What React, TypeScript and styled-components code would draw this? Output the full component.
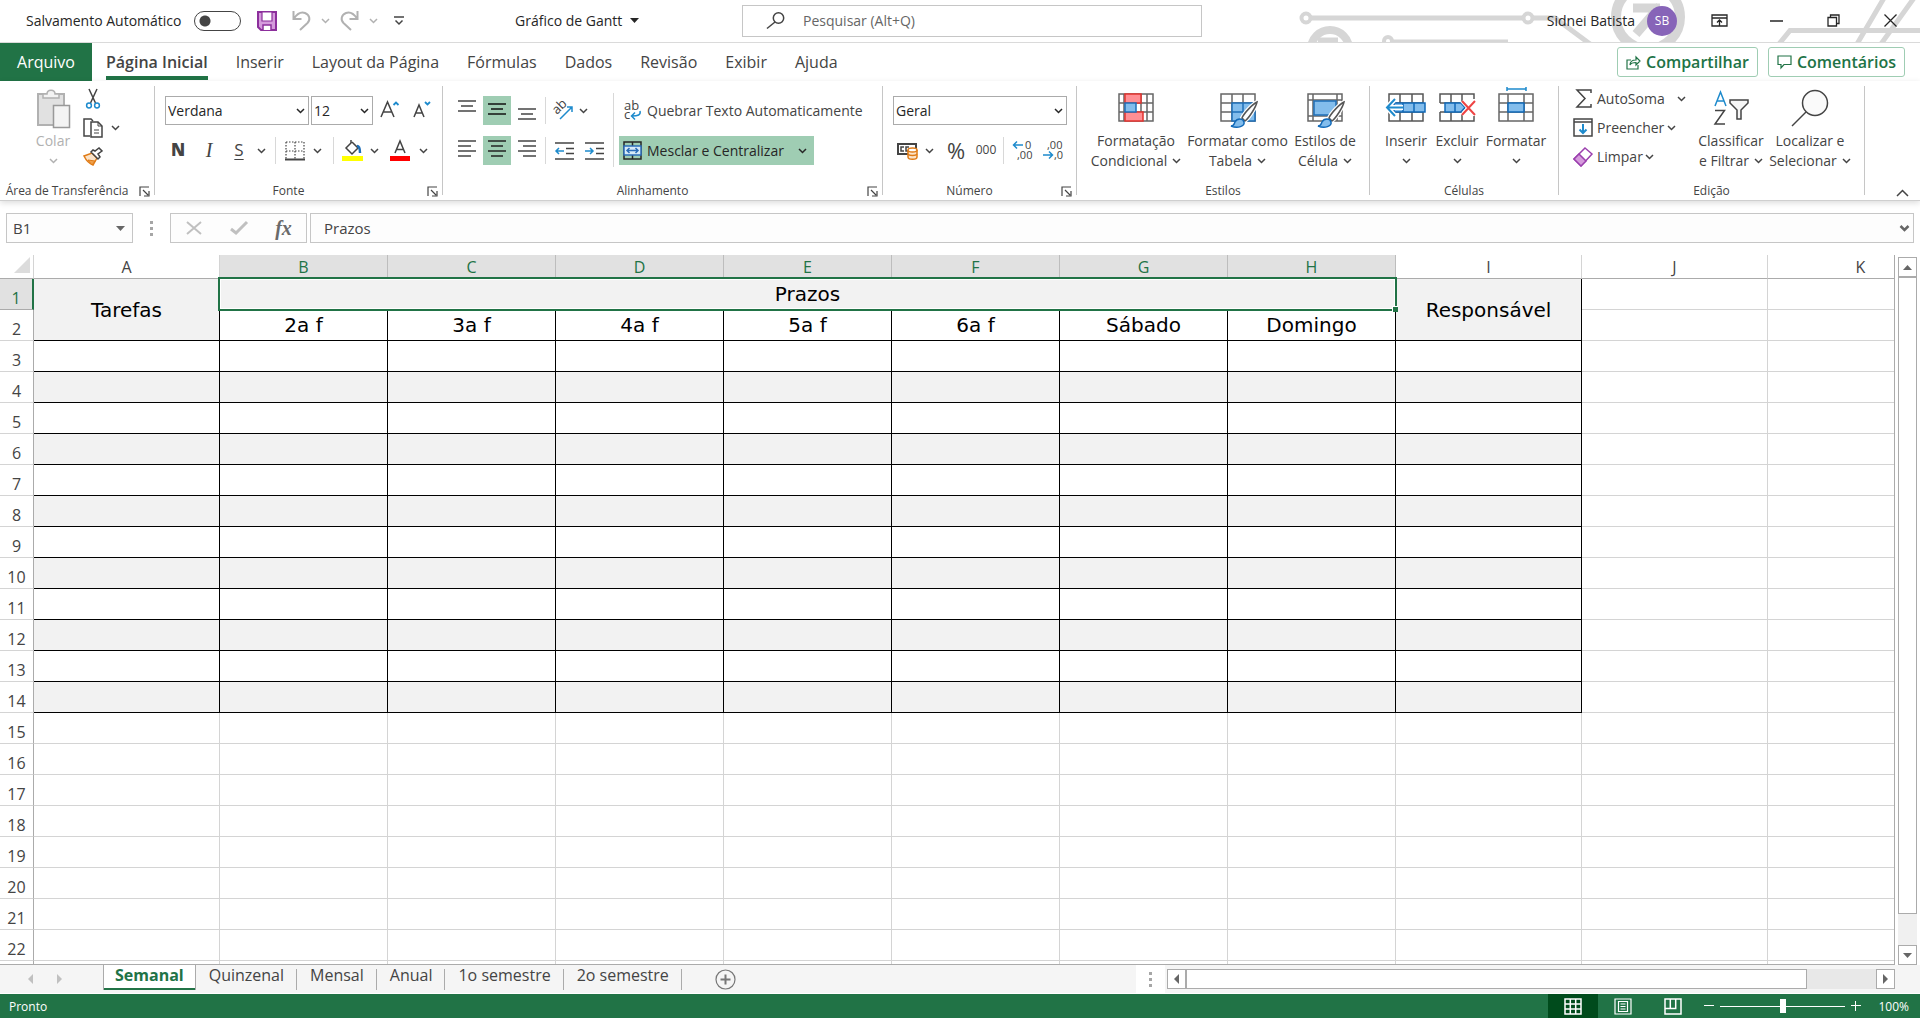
import React from "react";
import styled, { createGlobalStyle, css } from "styled-components";

const GREEN = "#217346";
const INK = "#444444";
const BLUE = "#1e8bcd";
const LINE = "#d4d4d4";
const UI = '"Open Sans", "Noto Sans", sans-serif';

const Global = createGlobalStyle`
  *, *::before, *::after { box-sizing: border-box; }
  html, body { margin: 0; padding: 0; overflow: hidden; }
  body { font-family: ${UI}; font-size: 14px; line-height: 20px; color: ${INK}; background: #fff; }
  button, input, select { font: inherit; color: inherit; margin: 0; padding: 0; border: 0; background: none; border-radius: 0; outline: 0; }
  button { cursor: pointer; white-space: nowrap; }
  svg { display: block; flex: none; overflow: visible; }
`;

const Window = styled.div`
  display: flex;
  flex-direction: column;
  height: 100vh;
  background: #fff;
`;

/* ---------- title bar ---------- */
const TitleBar = styled.header`
  position: relative;
  display: grid;
  grid-template-columns: 515fr 227fr 460fr 718fr;
  align-items: center;
  height: 43px;
  flex: none;
  padding-bottom: 1px;
  border-bottom: 1px solid #dadada;
  color: #262626;
`;
const Decor = styled.svg`
  position: absolute;
  top: 0;
  right: 0;
  overflow: hidden;
`;
const QuickAccess = styled.div`
  display: flex;
  align-items: center;
  padding-left: 26px;
`;
const AutoSave = styled.label`
  display: flex;
  align-items: center;
  gap: 13px;
  margin-right: 10px;
`;
const Toggle = styled.input`
  appearance: none;
  width: 47px;
  height: 20px;
  border: 1px solid #444;
  border-radius: 10px;
  background: radial-gradient(circle at 10px 9px, #444 5px, transparent 6px) #fff;
`;
const IconButton = styled.button<{ $w: number }>`
  display: flex;
  align-items: center;
  justify-content: center;
  width: ${(p) => p.$w}px;
  height: 32px;
`;
const DocName = styled.button`
  display: flex;
  align-items: center;
  gap: 8px;
`;
const SearchBox = styled.label`
  display: flex;
  align-items: center;
  gap: 18px;
  height: 32px;
  padding-left: 23px;
  border: 1px solid #c6c6c6;
  background: #fff;
`;
const SearchInput = styled.input`
  flex: 1;
  &::placeholder { color: #666; opacity: 1; }
`;
const Account = styled.div`
  position: relative;
  display: flex;
  align-items: center;
  justify-content: flex-end;
  padding-right: 1px;
`;
const Avatar = styled.button`
  width: 30px;
  height: 30px;
  margin: 0 14px 0 12px;
  border-radius: 50%;
  background: #8764b8;
  color: #fff;
  font-size: 12px;
`;

/* ---------- ribbon tabs ---------- */
const TabBar = styled.nav`
  display: flex;
  align-items: center;
  height: 38px;
  flex: none;
  padding-right: 15px;
`;
const FileTab = styled.button`
  align-self: stretch;
  width: 92px;
  background: ${GREEN};
  color: #fff;
  font-size: 16px;
`;
const RibbonTab = styled.button<{ $on?: boolean }>`
  height: 36px;
  margin-left: ${(p) => (p.$on ? 14 : 28)}px;
  padding-top: 4px;
  border-bottom: 4px solid ${(p) => (p.$on ? GREEN : "transparent")};
  font-size: 16px;
  font-weight: ${(p) => (p.$on ? 600 : 400)};
`;
const Spacer = styled.div`
  flex: 1;
`;
const OutlineButton = styled.button`
  display: flex;
  align-items: center;
  gap: 5px;
  height: 30px;
  margin-left: 10px;
  padding: 0 8px;
  border: 1px solid #9fcdb3;
  border-radius: 3px;
  color: ${GREEN};
  font-size: 16px;
  font-weight: 600;
`;

/* ---------- ribbon ---------- */
const Ribbon = styled.section`
  position: relative;
  z-index: 1;
  display: flex;
  height: 120px;
  flex: none;
  border-bottom: 1px solid #cfcfcf;
  background: #fff;
  box-shadow: 0 2px 6px rgba(0, 0, 0, 0.14);
`;
const Group = styled.div<{ $w: number }>`
  display: flex;
  flex-direction: column;
  flex: none;
  width: ${(p) => p.$w}px;
`;
const GroupBody = styled.div<{ $left?: number; $gap?: number }>`
  display: flex;
  flex: 1;
  gap: ${(p) => p.$gap ?? 0}px;
  padding-left: ${(p) => p.$left ?? 0}px;
`;
const GroupFooter = styled.div`
  display: flex;
  align-items: center;
  height: 18px;
  font-size: 12px;
`;
const GroupLabel = styled.span`
  flex: 1;
  text-align: center;
`;
const Launcher = styled.button`
  display: flex;
  justify-content: center;
  width: 20px;
`;
const Divider = styled.div`
  flex: none;
  width: 1px;
  margin: 5px 0;
  background: #c6c6c6;
`;
const Rows = styled.div`
  display: flex;
  flex-direction: column;
  gap: 11px;
  padding-top: 15px;
`;
const Row = styled.div<{ $left?: number; $gap?: number }>`
  display: flex;
  align-items: center;
  height: 29px;
  gap: ${(p) => p.$gap ?? 0}px;
  padding-left: ${(p) => p.$left ?? 0}px;
`;
const Tool = styled.button<{ $w: number; $on?: boolean }>`
  display: flex;
  align-items: center;
  justify-content: center;
  flex: none;
  width: ${(p) => p.$w}px;
  height: 29px;
  background: ${(p) => (p.$on ? "#9fcdb3" : "none")};
`;
const ToolSep = styled.span<{ $m: number }>`
  flex: none;
  width: 1px;
  height: 27px;
  margin: 0 ${(p) => p.$m}px;
  background: #d8d8d8;
`;
const TallSep = styled.div`
  width: 1px;
  height: 74px;
  margin: 12px 5px 0 5px;
  background: #d8d8d8;
`;
const TextTool = styled.button<{ $on?: boolean }>`
  display: flex;
  align-items: center;
  align-self: flex-start;
  gap: 5px;
  height: 29px;
  padding: 0 7px 0 4px;
  background: ${(p) => (p.$on ? "#9fcdb3" : "none")};
  color: ${(p) => (p.$on ? "#262626" : INK)};
`;
const ChevGap = styled.span`
  margin-left: 9px;
`;
const Glyph = styled.span<{ $kind: "bold" | "italic" | "under" | "pct" | "zeros" }>`
  padding-bottom: 2px;
  font-size: 17px;
  line-height: 24px;
  ${(p) => p.$kind === "bold" && css`font-weight: 800;`}
  ${(p) => p.$kind === "italic" && css`font-family: "Liberation Serif", serif; font-style: italic; font-size: 20px;`}
  ${(p) => p.$kind === "under" && css`text-decoration: underline; text-underline-offset: 3px; text-decoration-thickness: 1px;`}
  ${(p) => p.$kind === "pct" && css`font-size: 22px;`}
  ${(p) => p.$kind === "zeros" && css`font-size: 12px;`}
`;
const SelectWrap = styled.div<{ $w: number }>`
  display: grid;
  align-items: center;
  width: ${(p) => p.$w}px;
  height: 29px;
  border: 1px solid #ababab;
  color: #262626;
  > * { grid-area: 1 / 1; }
  > svg { justify-self: end; margin-right: 3px; pointer-events: none; }
`;
const Select = styled.select`
  appearance: none;
  width: 100%;
  height: 27px;
  padding-left: 2px;
`;
const BigTool = styled.button<{ $w: number; $off?: boolean }>`
  display: flex;
  flex-direction: column;
  align-items: center;
  flex: none;
  width: ${(p) => p.$w}px;
  padding-top: 8px;
  color: ${(p) => (p.$off ? "#b1b1b1" : INK)};
`;
const BigIcon = styled.span`
  display: flex;
  align-items: flex-start;
  height: 42px;
`;
const BigLine = styled.span`
  display: flex;
  align-items: center;
  justify-content: center;
  gap: 5px;
  height: 20px;
`;
const SmallStack = styled.div<{ $w: number }>`
  display: flex;
  flex-direction: column;
  flex: none;
  width: ${(p) => p.$w}px;
  padding-top: 3px;
`;
const StackTool = styled.button<{ $gap?: number }>`
  display: flex;
  align-items: center;
  gap: ${(p) => p.$gap ?? 0}px;
  height: 29px;
`;
const StackIcon = styled.span`
  display: flex;
  flex: none;
  justify-content: center;
  width: 20px;
  margin-right: 4px;
`;
const Collapse = styled.button`
  align-self: flex-end;
  margin: 0 11px 3px auto;
`;

/* ---------- formula bar ---------- */
const FormulaBar = styled.div`
  display: flex;
  align-items: center;
  flex: none;
  height: 54px;
  padding: 0 6px;
  font-size: 15px;
`;
const Boxed = styled.div<{ $w?: number }>`
  display: flex;
  align-items: center;
  ${(p) => (p.$w ? css`width: ${p.$w}px; flex: none;` : css`flex: 1;`)}
  height: 30px;
  border: 1px solid #c6c6c6;
  background: #fdfdfd;
`;
const NameInput = styled.input`
  flex: 1;
  min-width: 0;
  padding-left: 6px;
`;
const FormulaInput = styled.input`
  flex: 1;
  padding-left: 13px;
`;
const FxButton = styled.button`
  display: flex;
  flex: 1;
  align-items: center;
  justify-content: center;
`;
const Pad = styled.span<{ $w: number }>`
  display: flex;
  flex: none;
  justify-content: center;
  width: ${(p) => p.$w}px;
`;
const Fx = styled.span`
  font-family: "Liberation Serif", serif;
  font-style: italic;
  font-weight: 700;
  font-size: 20px;
  color: #6a6a6a;
`;

/* ---------- sheet ---------- */
const SheetArea = styled.main`
  display: flex;
  flex: 1;
  min-height: 0;
  padding-right: 3px;
`;
const Viewport = styled.div`
  flex: 1;
  min-width: 0;
  overflow: hidden;
  border-bottom: 1px solid #ababab;
  border-right: 1px solid #ababab;
`;
const Grid = styled.table`
  table-layout: fixed;
  width: 1954px;
  border-collapse: separate;
  border-spacing: 0;
`;
const Col = styled.col<{ $w: number }>`
  width: ${(p) => p.$w}px;
`;
const Corner = styled.th`
  height: 24px;
  padding: 0 3px 3px 0;
  border-right: 1px solid ${LINE};
  border-bottom: 1px solid #ababab;
  > svg { margin-left: auto; }
`;
const ColHead = styled.th<{ $on?: boolean }>`
  height: 24px;
  padding: 0;
  border-right: 1px solid ${(p) => (p.$on ? "#bdbdbd" : LINE)};
  border-bottom: 1px solid #ababab;
  background: ${(p) => (p.$on ? "#e1e1e1" : "#fff")};
  color: ${(p) => (p.$on ? GREEN : INK)};
  font-weight: 400;
  font-size: 16px;
`;
const RowHead = styled.th<{ $on?: boolean }>`
  height: 31px;
  padding: 7px 0 0;
  border-bottom: 1px solid ${(p) => (p.$on ? "#ababab" : LINE)};
  border-right: ${(p) => (p.$on ? `2px solid ${GREEN}` : "1px solid #ababab")};
  background: ${(p) => (p.$on ? "#e1e1e1" : "#fff")};
  color: ${(p) => (p.$on ? GREEN : INK)};
  font-weight: 400;
  font-size: 16px;
  line-height: 22px;
`;
const Cell = styled.td<{ $ink?: boolean; $shade?: boolean }>`
  height: 31px;
  padding: 0;
  border-right: 1px solid ${(p) => (p.$ink ? "#000" : LINE)};
  border-bottom: 1px solid ${(p) => (p.$ink ? "#000" : LINE)};
  background: ${(p) => (p.$shade ? "#f2f2f2" : "#fff")};
  color: #000;
  font-family: Verdana, "DejaVu Sans", sans-serif;
  font-size: 20px;
  line-height: 24px;
  text-align: center;
`;
const SelectedCell = styled(Cell)`
  position: relative;
  &::before {
    content: "";
    position: absolute;
    inset: -2px;
    border: 2px solid ${GREEN};
    box-shadow: inset 0 0 0 1px #fff;
  }
  &::after {
    content: "";
    position: absolute;
    right: -3px;
    bottom: -3px;
    width: 6px;
    height: 6px;
    border: solid #fff;
    border-width: 1px 0 0 1px;
    background: ${GREEN};
  }
`;
const VScroll = styled.div`
  display: flex;
  flex-direction: column;
  width: 19px;
  margin: 2px 0 0 3px;
  background: #f0f0f0;
`;
const ArrowButton = styled.button`
  display: flex;
  align-items: center;
  justify-content: center;
  flex: none;
  width: 19px;
  height: 20px;
  border: 1px solid #ababab;
  background: #fff;
`;
const Thumb = styled.div<{ $grow: number }>`
  flex: ${(p) => p.$grow};
  border: 1px solid #ababab;
  background: #fff;
`;
const Track = styled.div<{ $grow: number }>`
  flex: ${(p) => p.$grow};
`;

/* ---------- sheet tabs ---------- */
const BottomBar = styled.div`
  display: flex;
  flex: none;
  height: 29px;
  border-bottom: 1px solid #fff;
  background: #f5f5f5;
`;
const SheetNav = styled.div`
  display: flex;
  align-items: center;
  justify-content: center;
  gap: 24px;
  width: 103px;
  padding-right: 14px;
`;
const SheetTab = styled.button<{ $on?: boolean }>`
  height: 25px;
  padding: 0 ${(p) => (p.$on ? 11 : 13)}px 5px;
  font-size: 16px;
  ${(p) =>
    p.$on
      ? css`
          border: solid #ababab;
          border-width: 0 1px;
          box-shadow: inset 0 -2px 0 ${GREEN};
          background: #fff;
          color: ${GREEN};
          font-weight: 700;
        `
      : css`
          background: linear-gradient(#ababab, #ababab) right 4px / 1px 21px no-repeat;
        `}
`;
const AddSheet = styled.button`
  margin-left: 33px;
`;
const HScroll = styled.div`
  display: flex;
  align-items: center;
  width: 784px;
`;
const Grip = styled.span`
  display: flex;
  align-items: center;
  justify-content: center;
  align-self: stretch;
  width: 29px;
  margin-right: 2px;
  background: #fff;
`;
const HTrack = styled.div`
  display: flex;
  flex: 1;
  height: 20px;
  margin-right: 25px;
  background: #e8e8e8;
`;

/* ---------- status bar ---------- */
const StatusBar = styled.footer`
  display: flex;
  align-items: center;
  flex: none;
  height: 24px;
  padding: 0 11px 0 9px;
  background: ${GREEN};
  color: #fff;
  font-size: 12px;
`;
const StatusText = styled.span`
  padding-top: 2px;
`;
const ViewButton = styled.button<{ $on?: boolean }>`
  display: flex;
  align-items: center;
  justify-content: center;
  width: 50px;
  height: 24px;
  background: ${(p) => (p.$on ? "#004b1c" : "none")};
`;
const ZoomButton = styled.button`
  display: flex;
  justify-content: center;
  width: 22px;
`;
const ZoomRange = styled.input`
  appearance: none;
  width: 125px;
  height: 16px;
  background: linear-gradient(#fff, #fff) center / 100% 1px no-repeat;
  &::-webkit-slider-thumb {
    appearance: none;
    width: 6px;
    height: 14px;
    background: #fff;
  }
`;
const ZoomValue = styled(StatusText)`
  width: 42px;
  text-align: right;
`;

/* ---------- icons ---------- */
type IcoProps = { w: number; h: number; s?: string; sw?: number; children: React.ReactNode };
const Ico = ({ w, h, s = INK, sw = 1.5, children }: IcoProps) => (
  <svg width={w} height={h} viewBox={`0 0 ${w} ${h}`} fill="none" stroke={s} strokeWidth={sw} aria-hidden="true">
    {children}
  </svg>
);
const Chev = ({ c = INK }: { c?: string }) => (
  <Ico w={9} h={6} s={c}><path d="M1 1l3.500 3.500L8 1" /></Ico>
);
const Tri = ({ dir, c = "#666" }: { dir: "u" | "d" | "l" | "r"; c?: string }) => {
  const d = { u: "M0 5h9L4.500 0z", d: "M0 0h9L4.500 5z", l: "M5 0v10L0 5z", r: "M0 0v10l5-5z" }[dir];
  const flat = dir === "u" || dir === "d";
  return <svg width={flat ? 9 : 5} height={flat ? 5 : 10} fill={c} aria-hidden="true"><path d={d} /></svg>;
};
const Dots = () => (
  <svg width="3" height="15" fill="#a6a6a6" aria-hidden="true"><path d="M0 0h3v3H0zM0 6h3v3H0zM0 12h3v3H0z" /></svg>
);
const HLines = ({ rows, h = 21, c = INK }: { rows: number[][]; h?: number; c?: string }) => (
  <Ico w={18} h={h} s={c}>{rows.map(([y, a, b]) => <path key={y} d={`M${a} ${y}H${b}`} />)}</Ico>
);
const SaveIcon = () => (
  <Ico w={20} h={20} s="#8c2f9c" sw={2}>
    <path d="M1 1h18v18H4l-3-3z" fill="#d59bdc" />
    <path d="M5 1h10v9H5z" fill="#fff" strokeWidth="1.200" />
    <path d="M6 19v-5h8v5" fill="#fff" strokeWidth="1.500" />
  </Ico>
);
const UndoIcon = ({ flip }: { flip?: boolean }) => (
  <Ico w={19} h={21} s="#b1b1b1" sw={2}>
    <g transform={flip ? "translate(19 0) scale(-1 1)" : undefined}>
      <path d="M1.500 1v8h8M2 8.500C5 4 9 1.500 13 3c5 2 5.500 7 2.500 10L8 20" />
    </g>
  </Ico>
);
const Paste = () => (
  <Ico w={35} h={40} s="#b1b1b1">
    <path d="M2 5h26v31H2z" fill="#e1e1e1" strokeWidth="2" />
    <path d="M7 9V5h4c0-5 8-5 8 0h4v4z" fill="#f3f3f3" />
    <path d="M17.500 16.500h16v22h-16z" fill="#f3f3f3" stroke="#999" />
  </Ico>
);
const Cut = () => (
  <Ico w={14} h={20}>
    <path d="M3 0l6.500 14M11 0L4.500 14" />
    <g stroke={BLUE}><circle cx="3" cy="16.500" r="2.400" /><circle cx="11" cy="16.500" r="2.400" /></g>
  </Ico>
);
const Copy = () => (
  <Ico w={20} h={20}>
    <path d="M7 18H1V1h7l2 2" /><path d="M8 4h7l4 4v11H8z" fill="#fff" /><path d="M15 4v4h4M11 12h5M11 15h5" strokeWidth="1" />
  </Ico>
);
const Brush = () => (
  <Ico w={20} h={19}>
    <path d="M1 9l8-3 5 5-4 7c-3-1-7-5-9-9z" fill="#fbe3c8" stroke="#e07b16" />
    <path d="M5 13l7 1-3 4z" fill="#f0a04a" stroke="#e07b16" strokeWidth="1" />
    <path d="M8 5l7 7 2-2-2-3 4-3-3-3-4 3-2-1z" fill="#fff" />
  </Ico>
);
const Borders = () => (
  <Ico w={20} h={20}>
    <path d="M1 1h18M1 10h18M1 1v17M10 1v17M19 1v17" strokeDasharray="1.500 1.500" strokeWidth="1.200" /><path d="M0 18.500h20" strokeWidth="2" />
  </Ico>
);
const Fill = () => (
  <Ico w={21} h={21}>
    <path d="M10 2l6 6-6 6-6-6 5-5V0" /><path d="M15 6c2 0 3 3 3 7" stroke="#1e6fb8" strokeWidth="2.500" />
    <path d="M0 16h21v5H0z" fill="#ff0" stroke="none" />
  </Ico>
);
const FontColor = () => (
  <Ico w={20} h={21}><path d="M5 13L10 1l5 12M6.500 9.500h7" /><path d="M0 16h20v5H0z" fill="#f00" stroke="none" /></Ico>
);
const GrowFont = ({ down }: { down?: boolean }) => (
  <Ico w={20} h={20}>
    {down ? <path d="M2 16L7 4l5 12M4 12h6" /> : <path d="M1 16L7.500 1 14 16M3.500 11h8" />}
    <path d={down ? "M13 1l2.500 2.500L18 1" : "M13.500 4L16 1.500 18.500 4"} stroke={BLUE} strokeWidth="1.800" />
  </Ico>
);
const mini = { stroke: "none", fill: INK, fontFamily: UI } as const;
const Rotate = () => (
  <Ico w={21} h={20}>
    <text {...mini} fontSize="13" transform="translate(4 14) rotate(-45)">ab</text>
    <path d="M7 18L19 6M14 6h5v5" stroke={BLUE} />
  </Ico>
);
const Wrap = () => (
  <Ico w={19} h={21}>
    <text {...mini} fontSize="13" x="1" y="10">ab</text><text {...mini} fontSize="13" x="1" y="19">c</text>
    <path d="M17 11c1 4-2 5-8 5M12 12.500L8.500 16l3.500 3.500" stroke={BLUE} />
  </Ico>
);
const Merge = () => (
  <Ico w={19} h={19} s="#262626">
    <path d="M1 1h17v17H1zM9.500 1v17" /><path d="M1 5h17v9H1z" fill="#d6eaf8" stroke="#2b6cb8" />
    <path d="M4 9.500h11M6.500 7L4 9.500 6.500 12M12.500 7L15 9.500 12.500 12" stroke="#2b6cb8" />
  </Ico>
);
const Indent = ({ right }: { right?: boolean }) => (
  <Ico w={19} h={20}>
    <path d="M0 2h19M11 7.500h8M11 12.500h8M0 18h19" />
    <path d={right ? "M0 10h8M5 7l3 3-3 3" : "M1 10h8M4 7l-3 3 3 3"} stroke={BLUE} />
  </Ico>
);
const Money = () => (
  <Ico w={21} h={18}>
    <path d="M1 2h18v10H1z" strokeWidth="2" /><path d="M7 5H4v4h3M12 5H9v4h2" />
    <path d="M11 8v7c0 3 9 3 9 0V8" fill="#fbe3c8" stroke="#e07b16" /><ellipse cx="15.500" cy="8" rx="4.500" ry="2" fill="#fff" stroke="#e07b16" />
    <path d="M11 12c1 2 8 2 9 0" stroke="#e07b16" />
  </Ico>
);
const Decimals = ({ less }: { less?: boolean }) => (
  <Ico w={20} h={21}>
    <text {...mini} fontSize="11" x={less ? 4 : 12} y="9">{less ? ",00" : "0"}</text>
    <text {...mini} fontSize="11" x={less ? 11 : 4} y="19">{less ? ",0" : ",00"}</text>
    <path d={less ? "M0 15h9M6 11.500L9.500 15 6 18.500" : "M1 5h9M4 1.500L.500 5 4 8.500"} stroke={BLUE} />
  </Ico>
);
const CondFormat = () => (
  <Ico w={36} h={36} s="#666">
    <path d="M1 5h34v27H1zM6 5v27M29 5v27M1 14h34M1 23h34M23 5v27" />
    <path d="M7 5h16v9H7zM7 23h18v9H7z" fill="#ff8f94" stroke="#e3342f" /><path d="M7 14h11v9H7z" fill="#83bdec" stroke="#1e6fb8" />
  </Ico>
);
const PaintBrush = () => (
  <g>
    <path d="M37 13c-4 2-13 11-15 16l3 3c4-3 11-14 12-19z" fill="#fff" stroke="#fff" strokeWidth="4" />
    <path d="M37 13c-4 2-13 11-15 16l3 3c4-3 11-14 12-19z" fill="#fff" stroke="#555" />
    <path d="M11 37c3 0 3-2 4-4 2-4 8-4 9 0s-6 7-13 4z" fill="#83bdec" stroke="#1169b8" />
  </g>
);
const TableFormat = () => (
  <Ico w={36} h={40} s="#666">
    <path d="M1 5h34v27H1zM12 5v27M23 5v27M1 14h34M1 23h34" />
    <path d="M12 14h23v18H12z" fill="#83bdec" stroke="#1e6fb8" /><path d="M23 14v18M12 23h23" stroke="#1e6fb8" /><PaintBrush />
  </Ico>
);
const CellStyle = () => (
  <Ico w={36} h={40} s="#666">
    <path d="M1 5h34v27H1zM6 5v27M30 5v27M1 11h34M1 27h34" /><path d="M7 12h22v14H7z" fill="#83bdec" stroke="#1e6fb8" /><PaintBrush />
  </Ico>
);
const InsertCell = () => (
  <Ico w={40} h={36} s="#555">
    <path d="M3 5h34v27H3zM14 5v27M26 5v27M3 14h34M3 23h34" /><path d="M8 14h31v9H8z" fill="#83bdec" stroke="#1169b8" />
    <path d="M17 14v9M28 14v9" stroke="#1169b8" /><path d="M17 18.500H2M9 10l-8 8.500L9 27" stroke="#fff" strokeWidth="5" />
    <path d="M17 18.500H2M9 10l-8 8.500L9 27" stroke={BLUE} strokeWidth="2" />
  </Ico>
);
const DeleteCell = () => (
  <Ico w={36} h={36} s="#555">
    <path d="M1 14V5h34v5M12 5v9M23 5v9M1 23v9h34v-5M12 32v-9M23 32v-9M1 14h21M1 23h21" /><path d="M6 14h16l4 4.500-4 4.500H6z" fill="#83bdec" stroke="#1169b8" />
    <path d="M16 14v9" stroke="#1169b8" /><path d="M23 12l13 14M36 12L23 26" stroke="#fff" strokeWidth="4" /><path d="M23 12l13 14M36 12L23 26" stroke="#ee4444" strokeWidth="2" />
  </Ico>
);
const FormatCell = () => (
  <Ico w={36} h={36} s="#666">
    <path d="M1 5h34v27H1zM10 5v27M26 5v27M1 14h34M1 23h34" /><path d="M10 14h16v9H10z" fill="#83bdec" stroke="#1169b8" />
    <path d="M9 0h19M9-2v4M28-2v4" stroke={BLUE} />
  </Ico>
);
const Sigma = () => <Ico w={17} h={19}><path d="M16 4V1H2l8 8.500L2 18h14v-3" /></Ico>;
const FillDown = () => (
  <Ico w={20} h={19}><path d="M1 1h18v17H1zM1 4h18" /><path d="M10 6v9M6.500 11.500L10 15l3.500-3.500" stroke={BLUE} strokeWidth="2" /></Ico>
);
const Eraser = () => (
  <Ico w={20} h={20} s="#9b3fae"><path d="M12 1l7 6-11 12-7-7z" fill="#fff" /><path d="M6 7l7 7-5 5-7-7z" fill="#d59bdc" /></Ico>
);
const SortFilter = () => (
  <Ico w={37} h={37}>
    <path d="M2 17L7.500 3 13 17M4 12h7" stroke={BLUE} /><path d="M2 21.500h9.500L2 35h10" />
    <path d="M17 11h18v3l-7 7v9h-4v-9l-7-7z" fill="#f6f6f6" />
  </Ico>
);
const Find = () => (
  <Ico w={38} h={38}><circle cx="24" cy="14" r="12.500" fill="#fafafa" /><path d="M15 23L1 37" /></Ico>
);
const LaunchIcon = () => (
  <Ico w={11} h={11} sw={1.2}><path d="M1 10V1h9M4 4l5 5M10 5v5H5" /></Ico>
);

/* ---------- data ---------- */
const RIBBON_TABS = ["Página Inicial", "Inserir", "Layout da Página", "Fórmulas", "Dados", "Revisão", "Exibir", "Ajuda"];
const COLUMNS = ["A", "B", "C", "D", "E", "F", "G", "H", "I", "J", "K"];
const DAYS = ["2a f", "3a f", "4a f", "5a f", "6a f", "Sábado", "Domingo"];
const SHEETS = ["Semanal", "Quinzenal", "Mensal", "Anual", "1o semestre", "2o semestre"];
const colWidth = (i: number) => (i > 0 && i < 8 ? 168 : 186);

const Footer = ({ label, launch = true }: { label: string; launch?: boolean }) => (
  <GroupFooter>
    <GroupLabel>{label}</GroupLabel>
    {launch && <Launcher aria-label={`Opções de ${label}`}><LaunchIcon /></Launcher>}
  </GroupFooter>
);
const Big = ({ w, icon, a, b, off }: { w: number; icon: React.ReactNode; a: string; b?: string; off?: boolean }) => (
  <BigTool $w={w} $off={off}>
    <BigIcon>{icon}</BigIcon>
    <BigLine>{a}</BigLine>
    <BigLine>{b}<Chev c={off ? "#b1b1b1" : INK} /></BigLine>
  </BigTool>
);
const Drop = ({ w, label }: { w: number; label: string }) => <Tool $w={w} aria-label={label}><Chev /></Tool>;
const Combo = ({ w, value, label }: { w: number; value: string; label: string }) => (
  <SelectWrap $w={w}><Select aria-label={label} defaultValue={value}><option>{value}</option></Select><Chev c="#262626" /></SelectWrap>
);

export default function App() {
  return (
    <Window>
      <Global />
      <TitleBar>
        <Decor width="640" height="42" viewBox="0 0 640 42" fill="none" stroke="#d6d6d6" strokeWidth="5" aria-hidden="true">
          <circle cx="26" cy="18" r="4.500" strokeWidth="4" /><path d="M31 18h212" />
          <circle cx="248" cy="18" r="4.500" strokeWidth="4" /><path d="M253 18h22l35 26" />
          <circle cx="50" cy="49" r="19" strokeWidth="8" /><path d="M38 40h20" />
          <circle cx="108" cy="41" r="4" strokeWidth="4" /><path d="M113 42h115" />
          <circle cx="368" cy="17" r="32" strokeWidth="10" /><path d="M353 8h27M380 6L356 34" strokeWidth="9" />
          <path d="M499 44l11-13.500h130M577 44L604-2M601 44L634-2" />
        </Decor>
        <QuickAccess>
          <AutoSave>Salvamento Automático<Toggle type="checkbox" /></AutoSave>
          <IconButton $w={32} aria-label="Salvar"><SaveIcon /></IconButton>
          <IconButton $w={36} aria-label="Desfazer"><UndoIcon /></IconButton>
          <IconButton $w={12} aria-label="Opções de desfazer"><Chev c="#b1b1b1" /></IconButton>
          <IconButton $w={36} aria-label="Refazer"><UndoIcon flip /></IconButton>
          <IconButton $w={12} aria-label="Opções de refazer"><Chev c="#b1b1b1" /></IconButton>
          <IconButton $w={40} aria-label="Personalizar barra"><Ico w={10} h={9}><path d="M0 1h10M1.500 4.500L5 8l3.500-3.500" /></Ico></IconButton>
        </QuickAccess>
        <DocName>Gráfico de Gantt<Tri dir="d" c="#262626" /></DocName>
        <SearchBox>
          <Ico w={19} h={17}><circle cx="12.500" cy="6" r="5.200" /><path d="M9 10l-8 6.500" /></Ico>
          <SearchInput aria-label="Pesquisar" placeholder="Pesquisar (Alt+Q)" />
        </SearchBox>
        <Account>
          <span>Sidnei Batista</span>
          <Avatar>SB</Avatar>
          <IconButton $w={57} aria-label="Exibição da faixa"><Ico w={17} h={13} s="#262626"><path d="M1 1h15v11H1zM1 4h15M8.500 12V6M6 8.500L8.500 6 11 8.500" strokeWidth="1.300" /></Ico></IconButton>
          <IconButton $w={57} aria-label="Minimizar"><Ico w={13} h={2} s="#262626"><path d="M0 1h13" /></Ico></IconButton>
          <IconButton $w={57} aria-label="Restaurar"><Ico w={13} h={13} s="#262626" sw={1.3}><path d="M1 3.500h8.500V12H1zM3.500 3.500V1H12v8.500H9.500" /></Ico></IconButton>
          <IconButton $w={57} aria-label="Fechar"><Ico w={13} h={13} s="#262626" sw={1.3}><path d="M.500.500l12 12M12.500.500l-12 12" /></Ico></IconButton>
        </Account>
      </TitleBar>

      <TabBar>
        <FileTab>Arquivo</FileTab>
        {RIBBON_TABS.map((t, i) => <RibbonTab key={t} $on={i === 0}>{t}</RibbonTab>)}
        <Spacer />
        <OutlineButton><Ico w={15} h={15} s={GREEN} sw={1.2}><path d="M5 5H1v9h11v-4M4 10c0-4 3-5 6-5V2l4 4-4 4V7.500C7 7.500 5 8 4 10z" /></Ico>Compartilhar</OutlineButton>
        <OutlineButton><Ico w={15} h={14} s={GREEN} sw={1.2}><path d="M1 1h13v8.500H7L4 13V9.500H1z" /></Ico>Comentários</OutlineButton>
      </TabBar>

      <Ribbon>
        <Group $w={154}>
          <GroupBody $left={31}>
            <Big w={44} icon={<Paste />} a="Colar" off />
            <SmallStack $w={60}>
              <StackTool aria-label="Recortar"><Pad $w={36}><Cut /></Pad></StackTool>
              <StackTool aria-label="Copiar"><Pad $w={36}><Copy /></Pad><Chev /></StackTool>
              <StackTool aria-label="Pincel de formatação"><Pad $w={36}><Brush /></Pad></StackTool>
            </SmallStack>
          </GroupBody>
          <Footer label="Área de Transferência" />
        </Group>
        <Divider />

        <Group $w={287}>
          <GroupBody>
            <Rows>
              <Row $left={10} $gap={2}>
                <Combo w={144} value="Verdana" label="Fonte" />
                <Combo w={62} value="12" label="Tamanho da fonte" />
                <Tool $w={30} aria-label="Aumentar fonte"><GrowFont /></Tool>
                <Tool $w={30} aria-label="Diminuir fonte"><GrowFont down /></Tool>
              </Row>
              <Row $left={7}>
                <Tool $w={32}><Glyph $kind="bold">N</Glyph></Tool>
                <Tool $w={30}><Glyph $kind="italic">I</Glyph></Tool>
                <Tool $w={30}><Glyph $kind="under">S</Glyph></Tool>
                <Drop w={14} label="Opções de sublinhado" />
                <ToolSep $m={7} />
                <Tool $w={24} aria-label="Bordas"><Borders /></Tool>
                <Drop w={20} label="Opções de bordas" />
                <ToolSep $m={6} />
                <Tool $w={24} aria-label="Cor de preenchimento"><Fill /></Tool>
                <Drop w={20} label="Opções de preenchimento" />
                <Tool $w={32} aria-label="Cor da fonte"><FontColor /></Tool>
                <Drop w={14} label="Opções de cor" />
              </Row>
            </Rows>
          </GroupBody>
          <Footer label="Fonte" />
        </Group>
        <Divider />

        <Group $w={439}>
          <GroupBody>
            <Rows>
              <Row $left={10} $gap={2}>
                <Tool $w={28} aria-label="Alinhar acima"><HLines rows={[[1, 0, 18], [6, 3, 15], [11, 0, 18]]} /></Tool>
                <Tool $w={28} $on aria-label="Alinhar no meio"><HLines c="#111" rows={[[4, 0, 18], [9, 3, 15], [14, 0, 18]]} /></Tool>
                <Tool $w={28} aria-label="Alinhar abaixo"><HLines rows={[[9, 0, 18], [14, 3, 15], [19, 0, 18]]} /></Tool>
                <ToolSep $m={2} />
                <Tool $w={27} aria-label="Orientação"><Rotate /></Tool>
                <Drop w={8} label="Opções de orientação" />
              </Row>
              <Row $left={10} $gap={2}>
                <Tool $w={28} aria-label="Alinhar à esquerda"><HLines rows={[[1, 0, 18], [6, 0, 13], [11, 0, 18], [16, 0, 13]]} /></Tool>
                <Tool $w={28} $on aria-label="Centralizar"><HLines c="#222" rows={[[1, 0, 18], [6, 3, 15], [11, 0, 18], [16, 3, 15]]} /></Tool>
                <Tool $w={28} aria-label="Alinhar à direita"><HLines rows={[[1, 0, 18], [6, 5, 18], [11, 0, 18], [16, 5, 18]]} /></Tool>
                <ToolSep $m={2} />
                <Tool $w={28} aria-label="Diminuir recuo"><Indent /></Tool>
                <Tool $w={28} aria-label="Aumentar recuo"><Indent right /></Tool>
              </Row>
            </Rows>
            <TallSep />
            <Rows>
              <TextTool><Wrap />Quebrar Texto Automaticamente</TextTool>
              <TextTool $on><Merge />Mesclar e Centralizar<ChevGap><Chev c="#262626" /></ChevGap></TextTool>
            </Rows>
          </GroupBody>
          <Footer label="Alinhamento" />
        </Group>
        <Divider />

        <Group $w={193}>
          <GroupBody>
            <Rows>
              <Row $left={10}><Combo w={174} value="Geral" label="Formato de número" /></Row>
              <Row $left={10}>
                <Tool $w={28} aria-label="Formato de contabilização"><Money /></Tool>
                <Drop w={16} label="Opções de moeda" />
                <Tool $w={38}><Glyph $kind="pct">%</Glyph></Tool>
                <Tool $w={22}><Glyph $kind="zeros">000</Glyph></Tool>
                <ToolSep $m={6} />
                <Tool $w={26} aria-label="Aumentar casas decimais"><Decimals /></Tool>
                <Tool $w={34} aria-label="Diminuir casas decimais"><Decimals less /></Tool>
              </Row>
            </Rows>
          </GroupBody>
          <Footer label="Número" />
        </Group>
        <Divider />

        <Group $w={292}>
          <GroupBody $left={11} $gap={1}>
            <Big w={96} icon={<CondFormat />} a="Formatação" b="Condicional" />
            <Big w={105} icon={<TableFormat />} a="Formatar como" b="Tabela" />
            <Big w={68} icon={<CellStyle />} a="Estilos de" b="Célula" />
          </GroupBody>
          <Footer label="Estilos" launch={false} />
        </Group>
        <Divider />

        <Group $w={188}>
          <GroupBody $left={11}>
            <Big w={50} icon={<InsertCell />} a="Inserir" />
            <Big w={52} icon={<DeleteCell />} a="Excluir" />
            <Big w={66} icon={<FormatCell />} a="Formatar" />
          </GroupBody>
          <Footer label="Células" launch={false} />
        </Group>
        <Divider />

        <Group $w={305}>
          <GroupBody $left={14}>
            <SmallStack $w={122}>
              <StackTool><StackIcon><Sigma /></StackIcon>AutoSoma<Pad $w={34}><Chev /></Pad></StackTool>
              <StackTool><StackIcon><FillDown /></StackIcon>Preencher<Pad $w={14}><Chev /></Pad></StackTool>
              <StackTool><StackIcon><Eraser /></StackIcon>Limpar<Pad $w={14}><Chev /></Pad></StackTool>
            </SmallStack>
            <Big w={72} icon={<SortFilter />} a="Classificar" b="e Filtrar" />
            <Big w={86} icon={<Find />} a="Localizar e" b="Selecionar" />
          </GroupBody>
          <Footer label="Edição" launch={false} />
        </Group>
        <Divider />
        <Collapse aria-label="Recolher faixa"><Ico w={13} h={8}><path d="M1 7l5.500-5.500L12 7" /></Ico></Collapse>
      </Ribbon>

      <FormulaBar>
        <Boxed $w={127}><NameInput aria-label="Caixa de nome" defaultValue="B1" /><Pad $w={24}><Tri dir="d" /></Pad></Boxed>
        <Pad $w={37}><Dots /></Pad>
        <Boxed $w={137}>
          <FxButton aria-label="Cancelar"><Ico w={16} h={14} s="#c0c0c0" sw={2}><path d="M1 1l14 12M15 1L1 13" /></Ico></FxButton>
          <FxButton aria-label="Inserir"><Ico w={18} h={14} s="#c0c0c0" sw={3}><path d="M1 8l5 4L17 1" /></Ico></FxButton>
          <FxButton><Fx>fx</Fx></FxButton>
        </Boxed>
        <Pad $w={3} />
        <Boxed><FormulaInput aria-label="Fórmula" defaultValue="Prazos" /><Pad $w={18}><Ico w={9} h={7} s="#666" sw={2.5}><path d="M.500 1l4 4 4-4" /></Ico></Pad></Boxed>
      </FormulaBar>

      <SheetArea>
        <Viewport>
          <Grid>
            <colgroup>
              <Col $w={34} />
              {COLUMNS.map((c, i) => <Col key={c} $w={colWidth(i)} />)}
            </colgroup>
            <thead>
              <tr>
                <Corner><svg width="16" height="16" fill="#dcdcdc" aria-hidden="true"><path d="M16 0v16H0z" /></svg></Corner>
                {COLUMNS.map((c, i) => <ColHead key={c} $on={i > 0 && i < 8}>{c}</ColHead>)}
              </tr>
            </thead>
            <tbody>
              <tr>
                <RowHead $on>1</RowHead>
                <Cell rowSpan={2} $ink $shade>Tarefas</Cell>
                <SelectedCell colSpan={7} $ink $shade>Prazos</SelectedCell>
                <Cell rowSpan={2} $ink $shade>Responsável</Cell>
                <Cell /><Cell />
              </tr>
              <tr>
                <RowHead>2</RowHead>
                {DAYS.map((d) => <Cell key={d} $ink>{d}</Cell>)}
                <Cell /><Cell />
              </tr>
              {Array.from({ length: 21 }, (_, k) => k + 3).map((n) => (
                <tr key={n}>
                  <RowHead>{n < 23 ? n : null}</RowHead>
                  {COLUMNS.map((c, i) => (
                    <Cell key={c} $ink={n <= 14 && i < 9} $shade={n <= 14 && i < 9 && n % 2 === 0} />
                  ))}
                </tr>
              ))}
            </tbody>
          </Grid>
        </Viewport>
        <VScroll>
          <ArrowButton aria-label="Rolar para cima"><Tri dir="u" /></ArrowButton>
          <Thumb $grow={638} />
          <Track $grow={31} />
          <ArrowButton aria-label="Rolar para baixo"><Tri dir="d" /></ArrowButton>
        </VScroll>
      </SheetArea>

      <BottomBar>
        <SheetNav><Tri dir="l" c="#c0c0c0" /><Tri dir="r" c="#c0c0c0" /></SheetNav>
        {SHEETS.map((s, i) => <SheetTab key={s} $on={i === 0}>{s}</SheetTab>)}
        <AddSheet aria-label="Nova planilha"><Ico w={21} h={21} s="#777"><circle cx="10.500" cy="10.500" r="9.500" strokeWidth="1.200" /><path d="M10.500 5.500v10M5.500 10.500h10" strokeWidth="2" /></Ico></AddSheet>
        <Spacer />
        <HScroll>
          <Grip><Dots /></Grip>
          <HTrack>
            <ArrowButton aria-label="Rolar para a esquerda"><Tri dir="l" /></ArrowButton>
            <Thumb $grow={621} />
            <Track $grow={69} />
            <ArrowButton aria-label="Rolar para a direita"><Tri dir="r" /></ArrowButton>
          </HTrack>
        </HScroll>
      </BottomBar>

      <StatusBar>
        <StatusText>Pronto</StatusText>
        <Spacer />
        <ViewButton $on aria-label="Normal"><Ico w={18} h={17} s="#fff"><path d="M1 1h16v15H1zM6.300 1v15M11.700 1v15M1 6h16M1 11h16" /></Ico></ViewButton>
        <ViewButton aria-label="Layout da página"><Ico w={18} h={17} s="#fff"><path d="M1 1h16v15H1zM4.500 3.500h9v10h-9zM6.500 6h5M6.500 8.500h5M6.500 11h5" strokeWidth="1.200" /></Ico></ViewButton>
        <ViewButton aria-label="Quebra de página"><Ico w={18} h={17} s="#fff"><path d="M1 1h16v15H1zM6.300 1v9.500M11.700 1v9.500H1" /></Ico></ViewButton>
        <ZoomButton aria-label="Reduzir zoom"><Ico w={10} h={10} s="#fff" sw={1}><path d="M0 4.500h10" /></Ico></ZoomButton>
        <ZoomRange type="range" aria-label="Zoom" min={10} max={190} defaultValue={100} />
        <ZoomButton aria-label="Ampliar zoom"><Ico w={10} h={10} s="#fff" sw={1}><path d="M0 4.500h10M4.500 0v10" /></Ico></ZoomButton>
        <ZoomValue>100%</ZoomValue>
      </StatusBar>
    </Window>
  );
}
